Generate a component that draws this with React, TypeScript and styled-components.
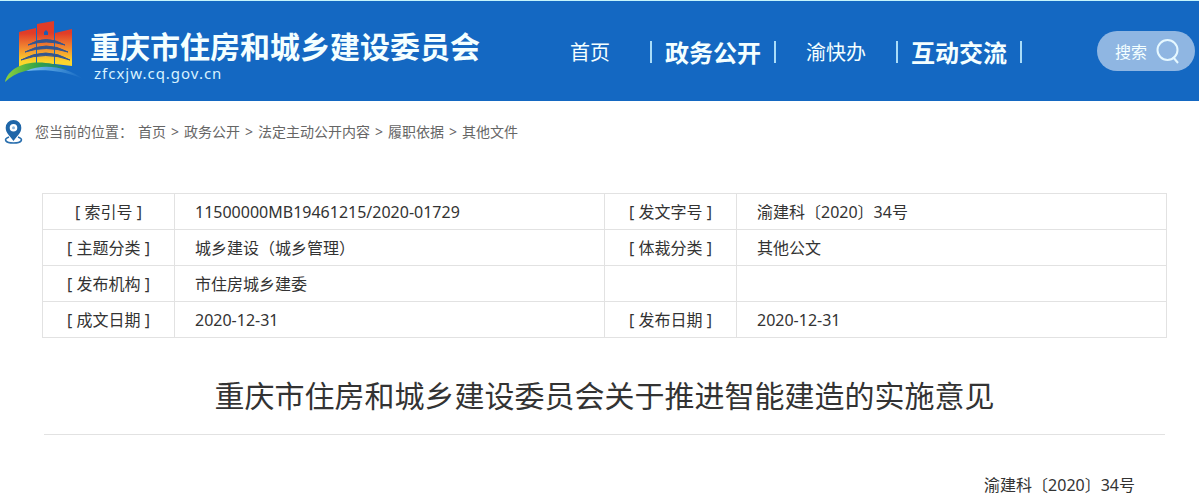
import React from "react";
import styled, { createGlobalStyle } from "styled-components";

const GlobalStyle = createGlobalStyle`
  * { box-sizing: border-box; }
  body {
    margin: 0;
    background: #fff;
    color: #333;
    font-family: "Noto Sans", "Noto Sans CJK SC", sans-serif;
    font-size: 16px;
  }
  a { color: inherit; text-decoration: none; }
`;

const Header = styled.header`
  display: flex;
  align-items: center;
  height: 101px;
  padding: 0 4px;
  border-top: 1px solid #c4f4fc;
  background: #1468c2;
  color: #f4ffff;
`;

const Brand = styled.a`
  display: flex;
  align-items: center;
  gap: 6px;
  flex: none;
`;

const BrandText = styled.div`
  display: flex;
  flex-direction: column;
  padding-top: 8px;
`;

const SiteName = styled.span`
  font: 700 30px/36px "Noto Sans CJK SC", sans-serif;
`;

const Domain = styled.span`
  padding-left: 4px;
  font-size: 15px;
  line-height: 20px;
  letter-spacing: 1px;
  color: #d8f2ff;
`;

const Nav = styled.nav`
  display: flex;
  align-items: center;
  flex: 1;
  margin-left: 90px;
  padding-top: 2px;
`;

const NavItem = styled.a<{ $strong?: boolean }>`
  font: ${(p) => (p.$strong ? "700 24px/32px" : "400 20px/32px")} "Noto Sans CJK SC", sans-serif;
`;

const Bar = styled.span<{ $before: number; $after: number }>`
  width: 2px;
  height: 22px;
  margin: 0 ${(p) => p.$after}px 0 ${(p) => p.$before}px;
  background: #a9dcf8;
`;

const Search = styled.button`
  display: flex;
  align-items: center;
  gap: 9px;
  height: 40px;
  padding: 0 15px 0 18px;
  border: 0;
  border-radius: 20px;
  background: #8fb6e2;
  color: #f4ffff;
  font: 400 16px/24px "Noto Sans CJK SC", sans-serif;
`;

const Crumbs = styled.nav`
  display: flex;
  align-items: center;
  gap: 5px;
  padding: 19px 4px 0;
  font-size: 14px;
  line-height: 24px;
  color: #666;
`;

const CrumbLabel = styled.span`
  margin-left: 7px;
`;

const Main = styled.main`
  margin: 49px 32px 0 42px;
`;

const Info = styled.table`
  width: 100%;
  table-layout: fixed;
  border-collapse: collapse;
`;

const Label = styled.th`
  width: 132px;
  height: 36px;
  padding: 0;
  border: 1px solid #e2e2e2;
  font-weight: 400;
  line-height: 24px;
`;

const Value = styled.td`
  height: 36px;
  padding: 0 20px;
  border: 1px solid #e2e2e2;
  line-height: 24px;
`;

const Title = styled.h1`
  margin: 34px 2px 0;
  padding-bottom: 14px;
  border-bottom: 1px solid #e2e2e2;
  font-size: 30px;
  font-weight: 400;
  line-height: 48px;
  text-align: center;
`;

const DocNumber = styled.p`
  margin: 0;
  padding: 38px 32px 0 0;
  line-height: 24px;
  text-align: right;
`;

const rows = [
  ["索引号", "11500000MB19461215/2020-01729", "发文字号", "渝建科〔2020〕34号"],
  ["主题分类", "城乡建设（城乡管理）", "体裁分类", "其他公文"],
  ["发布机构", "市住房城乡建委", "", ""],
  ["成文日期", "2020-12-31", "发布日期", "2020-12-31"],
];

const crumbs = ["首页", "政务公开", "法定主动公开内容", "履职依据", "其他文件"];

const Logo = () => (
  <svg width="80" height="64" viewBox="4 19 80 64" aria-hidden="true">
    <defs>
      <linearGradient id="wall" gradientUnits="userSpaceOnUse" x1="0" y1="22" x2="0" y2="66">
        <stop offset="0.25" stopColor="#e03c28" />
        <stop offset="0.55" stopColor="#f08030" />
        <stop offset="0.9" stopColor="#fbd62c" />
      </linearGradient>
      <linearGradient id="hill" x1="0" y1="0" x2="1" y2="0">
        <stop offset="0" stopColor="#8ed13c" />
        <stop offset="0.5" stopColor="#35a548" />
        <stop offset="1" stopColor="#1c7a80" />
      </linearGradient>
      <linearGradient id="river" x1="0" y1="0" x2="1" y2="0">
        <stop offset="0" stopColor="#7cc4f2" />
        <stop offset="1" stopColor="#1468c2" />
      </linearGradient>
    </defs>
    <path d="M19 32L36 28V64L19 67ZM37 24L54 21V64L37 64ZM55 33L72 29V66L55 64Z" fill="url(#wall)" />
    <path d="M44 35L44 32L46 30L48 32V35Z" fill="#1e5cb0" />
    <path
      d="M28 45Q46 34 65 45Q46 39 28 45ZM25 52Q46 40 68 52Q46 45 25 52ZM21 60Q46 46 70 60Q46 51 21 60Z"
      fill="#34558f"
      stroke="#34558f"
      strokeWidth="1"
    />
    <path d="M5 82C9 64 38 56 68 69C40 67 18 69 5 82Z" fill="url(#hill)" />
    <path d="M26 71C44 63 67 67 83 79C65 71 46 69 26 71Z" fill="url(#river)" />
  </svg>
);

const Pin = () => (
  <svg width="19" height="24" viewBox="0 0 19 24" aria-hidden="true">
    <path d="M5 17C-1 19 1 23 9.500 23S20 19 14 17" fill="none" stroke="#2a6fae" strokeWidth="1.600" />
    <path fillRule="evenodd" d="M9.500 0A7.800 7.800 0 0 0 1.700 8c0 5 4.300 8 7.800 13C13 16 17.300 13 17.300 8A7.800 7.800 0 0 0 9.500 0ZM9.500 4a3.800 3.800 0 1 1 0 7.600 3.800 3.800 0 0 1 0-7.600Z" fill="#1f66a8" />
    <circle cx="9.500" cy="7.800" r="1.500" fill="#8fb8dc" />
  </svg>
);

export default function App() {
  return (
    <>
      <GlobalStyle />
      <Header>
        <Brand href="#">
          <Logo />
          <BrandText>
            <SiteName>重庆市住房和城乡建设委员会</SiteName>
            <Domain>zfcxjw.cq.gov.cn</Domain>
          </BrandText>
        </Brand>
        <Nav>
          <NavItem href="#">首页</NavItem>
          <Bar $before={40} $after={13} />
          <NavItem href="#" $strong>政务公开</NavItem>
          <Bar $before={13} $after={30} />
          <NavItem href="#">渝快办</NavItem>
          <Bar $before={30} $after={13} />
          <NavItem href="#" $strong>互动交流</NavItem>
          <Bar $before={13} $after={0} />
        </Nav>
        <Search type="button">
          搜索
          <svg width="24" height="26" viewBox="0 0 24 26" fill="none" stroke="#e6f8ff" strokeWidth="2" aria-hidden="true">
            <circle cx="11.500" cy="12" r="10" />
            <path d="M17 19L22 25" />
          </svg>
        </Search>
      </Header>
      <Crumbs>
        <Pin />
        <CrumbLabel>您当前的位置：</CrumbLabel>
        {crumbs.map((name, i) => (
          <React.Fragment key={name}>
            {i > 0 && <span>&gt;</span>}
            <a href="#">{name}</a>
          </React.Fragment>
        ))}
      </Crumbs>
      <Main>
        <Info>
          <tbody>
            {rows.map(([k1, v1, k2, v2]) => (
              <tr key={k1}>
                <Label scope="row">[ {k1} ]</Label>
                <Value>{v1}</Value>
                <Label scope="row">{k2 && `[ ${k2} ]`}</Label>
                <Value>{v2}</Value>
              </tr>
            ))}
          </tbody>
        </Info>
        <Title>重庆市住房和城乡建设委员会关于推进智能建造的实施意见</Title>
        <DocNumber>渝建科〔2020〕34号</DocNumber>
      </Main>
    </>
  );
}
